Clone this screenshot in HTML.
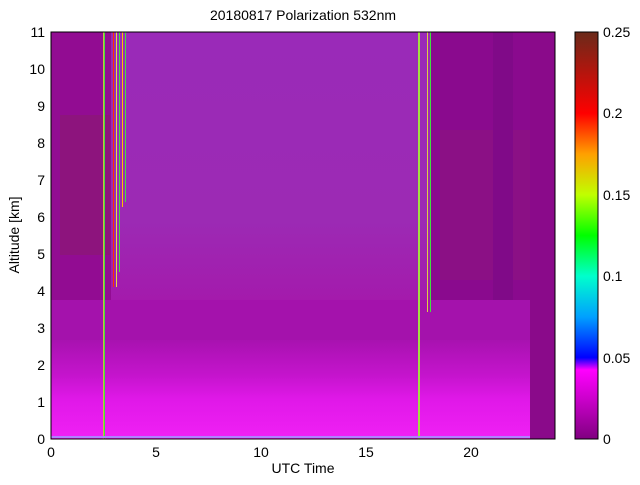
<!DOCTYPE html>
<html><head><style>
body{margin:0;background:#fff;width:640px;height:480px;overflow:hidden;font-family:"Liberation Sans",sans-serif;}
</style></head><body>
<svg width="640" height="480" xmlns="http://www.w3.org/2000/svg" font-family="Liberation Sans, sans-serif">
<defs>
<linearGradient id="cb" x1="0" y1="1" x2="0" y2="0">
<stop offset="0" stop-color="#800080"/>
<stop offset="0.1" stop-color="#cc00cc"/>
<stop offset="0.17" stop-color="#ff00ff"/>
<stop offset="0.2" stop-color="#0000ff"/>
<stop offset="0.3" stop-color="#00a0ff"/>
<stop offset="0.4" stop-color="#00ffcc"/>
<stop offset="0.5" stop-color="#00ff00"/>
<stop offset="0.6" stop-color="#c0ff00"/>
<stop offset="0.7" stop-color="#ffa000"/>
<stop offset="0.8" stop-color="#ff0000"/>
<stop offset="1" stop-color="#6a2a1a"/>
</linearGradient>
<linearGradient id="mid" x1="0" y1="0" x2="0" y2="1">
<stop offset="0" stop-color="#9a2ab8"/>
<stop offset="0.7" stop-color="#9c2ab4"/>
<stop offset="1" stop-color="#a41aac"/>
</linearGradient>
<linearGradient id="bot" x1="0" y1="0" x2="0" y2="1">
<stop offset="0" stop-color="#a812b0"/>
<stop offset="0.35" stop-color="#c414cc"/>
<stop offset="0.6" stop-color="#e018e8"/>
<stop offset="1" stop-color="#f020f5"/>
</linearGradient>
</defs>
<text x="303" y="20" font-size="14" text-anchor="middle">20180817 Polarization 532nm</text>
<rect x="51" y="32" width="504" height="407" fill="#8c0a90"/>
<rect x="110" y="32" width="320" height="270" fill="url(#mid)"/>
<rect x="51" y="32" width="60" height="270" fill="#920c92"/>
<rect x="60" y="115" width="50" height="140" fill="#8a1a70" opacity="0.6"/>
<rect x="430" y="32" width="100" height="280" fill="#8a0a8e"/>
<rect x="440" y="130" width="90" height="150" fill="#8c1a78" opacity="0.4"/>
<rect x="493" y="32" width="20" height="284" fill="#800a88"/>
<rect x="530" y="32" width="25" height="407" fill="#8a0a8a"/>
<rect x="51" y="300" width="479" height="40" fill="#a412ac"/>
<rect x="51" y="340" width="479" height="99" fill="url(#bot)"/>
<rect x="103" y="32" width="2" height="407" fill="#c8c040"/>
<rect x="104" y="32" width="1" height="407" fill="#40e040"/>
<rect x="113" y="32" width="1" height="255" fill="#ff3000"/>
<rect x="116" y="32" width="1" height="255" fill="#e0e040"/>
<rect x="119" y="32" width="1" height="240" fill="#40e040"/>
<rect x="122" y="32" width="1" height="175" fill="#ffc000"/>
<rect x="125" y="32" width="1" height="170" fill="#40e040"/>
<rect x="418" y="32" width="2" height="407" fill="#a0e040"/>
<rect x="427" y="32" width="1" height="280" fill="#e0d040"/>
<rect x="430" y="32" width="1" height="280" fill="#40e040"/>
<rect x="51" y="436" width="479" height="2" fill="#b080ff"/>
<rect x="51" y="32" width="504" height="407" fill="none" stroke="#000" stroke-width="1"/>
<g font-size="14" text-anchor="end">
<text x="45" y="444">0</text><text x="45" y="407">1</text><text x="45" y="370">2</text><text x="45" y="333">3</text><text x="45" y="296">4</text><text x="45" y="259">5</text><text x="45" y="222">6</text><text x="45" y="185">7</text><text x="45" y="148">8</text><text x="45" y="111">9</text><text x="45" y="74">10</text><text x="45" y="37">11</text>
</g>
<g font-size="14" text-anchor="middle">
<text x="51" y="457">0</text><text x="156" y="457">5</text><text x="261" y="457">10</text><text x="366" y="457">15</text><text x="471" y="457">20</text>
</g>
<text x="303" y="473" font-size="14" text-anchor="middle">UTC Time</text>
<text transform="translate(19,235) rotate(-90)" font-size="14" text-anchor="middle">Altitude [km]</text>
<rect x="575" y="32" width="23" height="407" fill="url(#cb)" stroke="#000" stroke-width="1"/>
<g font-size="14">
<text x="603" y="444">0</text><text x="603" y="363">0.05</text><text x="603" y="281">0.1</text><text x="603" y="200">0.15</text><text x="603" y="118">0.2</text><text x="603" y="37">0.25</text>
</g>
</svg>
</body></html>
